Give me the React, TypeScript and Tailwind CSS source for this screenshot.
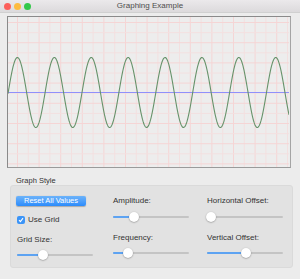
const W = 281;
const H = 150;

function sinePath() {
  const pts: string[] = [];
  for (let x = 0; x <= W; x += 0.5) {
    const y = 75.5 - 35 * Math.sin(((x - 0.2) / 36.9) * Math.PI * 2);
    pts.push(`${x === 0 ? 'M' : 'L'}${x.toFixed(1)},${y.toFixed(2)}`);
  }
  return pts.join(' ');
}

function Graph() {
  const vLines: number[] = [];
  for (let x = 9.5; x < W; x += 10.8) vLines.push(x);
  const hLines: number[] = [];
  for (let y = 5.5; y < H; y += 10.1) hLines.push(y);
  return (
    <svg width={W} height={H} className="block">
      <rect width={W} height={H} fill="#ededed" />
      {vLines.map((x, i) => (
        <line key={'v' + i} x1={x} y1={0} x2={x} y2={H} stroke={i % 2 ? '#f3e0e0' : '#f5d5d5'} strokeWidth={1} />
      ))}
      {hLines.map((y, i) => (
        <line key={'h' + i} x1={0} y1={y} x2={W} y2={y} stroke={i % 2 ? '#f3e0e0' : '#f5d5d5'} strokeWidth={1} />
      ))}
      <line x1={0} y1={75.5} x2={W} y2={75.5} stroke="#8f90fb" strokeWidth={1} />
      <path d={sinePath()} fill="none" stroke="#66926a" strokeWidth={1.1} />
    </svg>
  );
}

function Slider({ pos }: { pos: number }) {
  return (
    <div className="relative w-[76px] h-[10px]">
      <div className="absolute left-0 right-0 top-[4px] h-[2px] rounded bg-[#c4c4c4]" />
      <div className="absolute left-0 top-[4px] h-[2px] rounded bg-[#5da3f2]" style={{ width: pos }} />
      <div
        className="absolute top-0 w-[10px] h-[10px] rounded-full bg-white shadow-[0_0.5px_1.5px_rgba(0,0,0,0.4)]"
        style={{ left: pos - 5 }}
      />
    </div>
  );
}

export default function App() {
  return (
    <div className="w-[300px] h-[279px] bg-[#ececec] flex flex-col text-[8px] leading-[10px] text-[#333] overflow-hidden" style={{ fontFamily: '"Liberation Sans", Arial, sans-serif' }}>
      {/* title bar */}
      <div className="relative h-[13px] bg-gradient-to-b from-[#ebe9eb] to-[#dcdadc] flex items-center justify-center border-b border-[#d0d0d0]">
        <div className="absolute left-[4px] top-[3px] flex gap-[3px]">
          <div className="w-[7px] h-[7px] rounded-full bg-[#fc605c]" />
          <div className="w-[7px] h-[7px] rounded-full bg-[#fdbc40]" />
          <div className="w-[7px] h-[7px] rounded-full bg-[#34c84a]" />
        </div>
        <span className="text-[#4d4d4d] text-[8px]">Graphing Example</span>
      </div>

      {/* graph */}
      <div className="ml-[7px] mt-[3px] w-[284px] border-[1.5px] border-t-[#8a8a8a] border-l-[#8a8a8a] border-r-[#a5a5a5] border-b-[#9a9a9a]">
        <Graph />
      </div>

      <div className="ml-[16px] mt-[9px] text-[7.5px] leading-[8px]">Graph Style</div>

      {/* group box */}
      <div className="ml-[10px] w-[283px] h-[83px] rounded-[3px] bg-[#e2e2e2] border border-[#dadada] pl-[6px] pt-[10px] grid grid-cols-[96px_94px_80px]">
        <div className="flex flex-col">
          <div className="ml-[-1px] w-[70px] h-[10px] rounded-[2px] bg-gradient-to-b from-[#6cb3fa] to-[#2a8bfb] text-white text-[7.5px] flex items-center justify-center shadow-[0_0.5px_1px_rgba(0,0,0,0.25)]">
            Reset All Values
          </div>
          <div className="flex items-center mt-[9px]">
            <div className="w-[8px] h-[8px] rounded-[2px] bg-[#3b94f7] flex items-center justify-center">
              <svg width="6" height="6" viewBox="0 0 6 6">
                <path d="M1 3.2 L2.4 4.6 L5 1.2" fill="none" stroke="white" strokeWidth="1.1" />
              </svg>
            </div>
            <span className="ml-[3px]">Use Grid</span>
          </div>
          <div className="mt-[10px]">Grid Size:</div>
          <div className="mt-[5px]">
            <Slider pos={26} />
          </div>
        </div>
        <div className="flex flex-col">
          <div>Amplitude:</div>
          <div className="mt-[6px]">
            <Slider pos={21} />
          </div>
          <div className="mt-[11px]">Frequency:</div>
          <div className="mt-[5px]">
            <Slider pos={15} />
          </div>
        </div>
        <div className="flex flex-col">
          <div>Horizontal Offset:</div>
          <div className="mt-[6px]">
            <Slider pos={4} />
          </div>
          <div className="mt-[11px]">Vertical Offset:</div>
          <div className="mt-[5px]">
            <Slider pos={39} />
          </div>
        </div>
      </div>
    </div>
  );
}
